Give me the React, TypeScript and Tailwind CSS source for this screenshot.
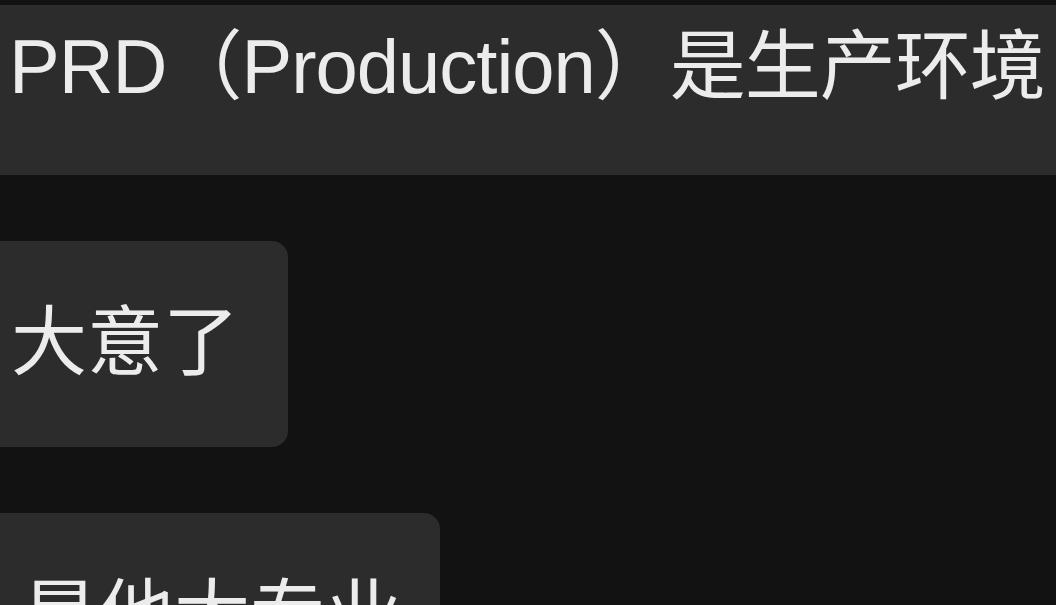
const font = {
  fontFamily: '"Liberation Sans", "Noto Sans CJK SC", sans-serif',
};

// 聊天气泡（放大截图，左侧被裁切）
function Bubble({ text, className = "" }: { text: string; className?: string }) {
  return (
    <div className={`shrink-0 bg-[#2c2c2c] text-[#ececec] text-[76px] leading-none whitespace-nowrap ${className}`}>
      {text}
    </div>
  );
}

export default function App() {
  return (
    <div
      className="h-[605px] w-[1056px] overflow-hidden bg-[#121212] pt-[5px] flex flex-col items-start"
      style={font}
    >
      <Bubble
        text="PRD（Production）是生产环境"
        className="w-full h-[170px] pt-[24px] pl-[9px] tracking-[-1px]"
      />
      <Bubble
        text="大意了"
        className="mt-[66px] w-[288px] h-[206px] pt-[64px] pl-[11px] rounded-r-[16px]"
      />
      <Bubble
        text="是他太专业"
        className="mt-[66px] w-[440px] h-[206px] pt-[65px] pl-[22px] rounded-r-[16px]"
      />
    </div>
  );
}
